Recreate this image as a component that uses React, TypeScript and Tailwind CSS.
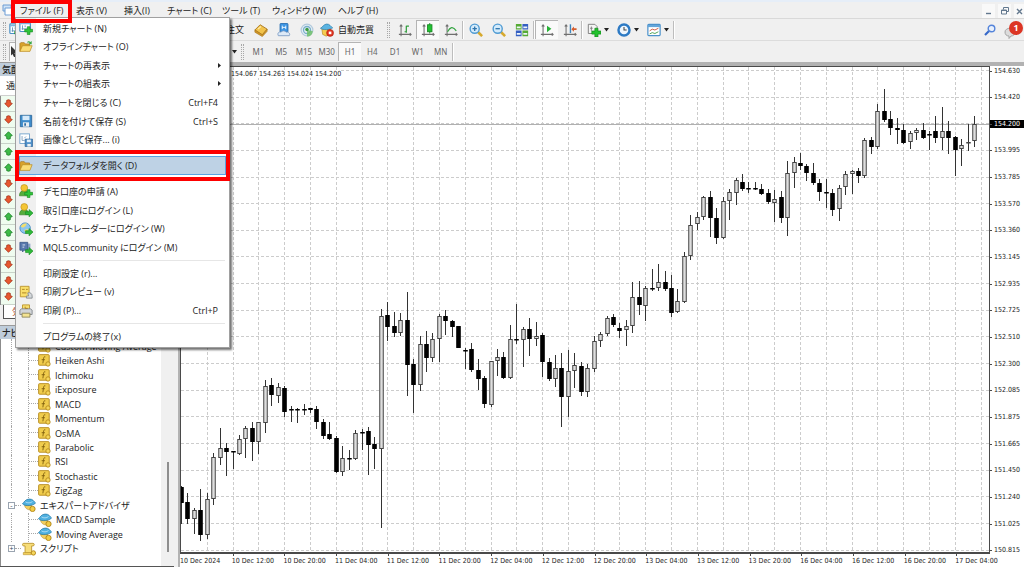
import React from 'react';
import clsx from 'clsx';

type Kind = 'up' | 'down';
type Candle = [high: number, top: number, bottom: number, low: number, kind: Kind];

const U: Kind = 'up';
const D: Kind = 'down';

// One entry per H1 bar, vertical positions in window pixels
const candles: Candle[] = [
  [486, 487, 503, 524, D], [493, 502, 519, 524, D], [508, 510, 519, 534, U], [489, 510, 535, 541, D],
  [493, 499, 535, 539, U], [453, 457, 499, 505, U], [428, 448, 458, 465, U], [443, 448, 452, 476, D],
  [451, 451, 452, 469, D], [435, 439, 454, 455, U], [426, 428, 439, 458, U], [422, 428, 442, 461, D],
  [422, 422, 442, 454, U], [380, 386, 423, 433, U], [378, 385, 395, 406, D], [383, 387, 396, 403, U],
  [386, 388, 412, 417, D], [406, 409, 410, 422, D], [408, 409, 410, 423, D], [404, 409, 410, 415, D],
  [408, 408, 410, 413, D], [406, 409, 422, 429, D], [419, 422, 436, 439, D], [422, 434, 439, 440, D],
  [436, 438, 472, 473, D], [446, 458, 472, 476, U], [450, 458, 459, 470, D], [430, 433, 459, 460, U],
  [429, 432, 433, 450, D], [427, 431, 445, 475, D], [437, 444, 449, 469, D], [309, 316, 449, 528, U],
  [302, 315, 327, 341, D], [312, 326, 333, 337, D], [313, 320, 333, 336, U], [292, 320, 365, 396, D],
  [359, 364, 385, 413, D], [336, 344, 385, 391, U], [331, 344, 358, 372, D], [333, 339, 358, 362, U],
  [314, 316, 339, 362, U], [310, 316, 321, 335, D], [320, 321, 327, 337, D], [326, 326, 348, 348, D],
  [348, 350, 351, 369, D], [343, 349, 370, 372, D], [359, 370, 379, 390, D], [376, 378, 404, 408, D],
  [361, 361, 405, 407, U], [349, 357, 361, 376, U], [352, 357, 378, 379, D], [325, 339, 378, 379, U],
  [304, 339, 340, 344, D], [327, 329, 340, 367, U], [318, 329, 339, 356, D], [322, 336, 339, 346, U],
  [333, 335, 362, 377, D], [358, 362, 379, 381, D], [355, 368, 379, 387, U], [353, 368, 397, 427, D],
  [350, 371, 397, 417, U], [353, 365, 371, 388, U], [362, 366, 392, 396, D], [364, 368, 392, 397, U],
  [336, 341, 369, 372, U], [332, 334, 341, 347, U], [316, 318, 334, 336, U], [314, 317, 325, 327, D],
  [323, 328, 331, 338, D], [320, 326, 330, 346, U], [282, 297, 326, 333, U], [281, 297, 305, 315, D],
  [286, 288, 306, 321, U], [269, 288, 289, 291, D], [264, 282, 288, 291, U], [271, 282, 289, 291, D],
  [275, 288, 313, 317, D], [289, 301, 312, 313, U], [252, 256, 302, 303, U], [215, 225, 256, 260, U],
  [212, 217, 224, 230, U], [196, 197, 217, 220, U], [191, 197, 218, 237, D], [208, 218, 238, 244, D],
  [197, 201, 238, 239, U], [189, 192, 201, 220, U], [178, 180, 193, 205, U], [174, 182, 189, 191, D],
  [182, 188, 189, 193, D], [182, 188, 189, 190, D], [184, 189, 194, 195, D], [189, 193, 202, 204, D],
  [190, 199, 203, 222, U], [191, 197, 218, 223, D], [161, 173, 218, 236, U], [157, 162, 173, 188, U],
  [153, 163, 166, 170, D], [164, 166, 173, 181, D], [163, 173, 183, 185, D], [179, 183, 192, 201, D],
  [179, 192, 193, 208, D], [189, 193, 210, 216, D], [185, 188, 209, 221, U], [171, 174, 187, 195, U],
  [170, 171, 174, 194, U], [168, 171, 176, 183, D], [138, 140, 176, 178, U], [137, 140, 147, 154, D],
  [104, 111, 147, 149, U], [89, 111, 120, 122, D], [111, 119, 128, 135, D], [118, 128, 130, 144, D],
  [124, 130, 143, 144, D], [131, 133, 142, 149, U], [128, 130, 133, 140, U], [123, 130, 138, 139, D],
  [131, 134, 135, 150, D], [116, 131, 138, 143, D], [107, 131, 138, 150, U], [121, 131, 138, 154, D],
  [136, 137, 150, 176, D], [139, 145, 149, 166, U], [124, 142, 143, 151, U], [116, 124, 141, 147, U],
];

const prices = [
  '154.630', '154.420', '154.200', '153.995', '153.785', '153.570', '153.360', '153.145', '152.935', '152.725',
  '152.510', '152.300', '152.085', '151.875', '151.665', '151.450', '151.240', '151.025', '150.815',
];

const dates = [
  '10 Dec 2024', '10 Dec 12:00', '10 Dec 20:00', '11 Dec 04:00', '11 Dec 12:00', '11 Dec 20:00', '12 Dec 04:00',
  '12 Dec 12:00', '12 Dec 20:00', '13 Dec 04:00', '13 Dec 12:00', '13 Dec 20:00', '16 Dec 04:00', '16 Dec 12:00',
  '16 Dec 20:00', '17 Dec 04:00',
];

const PLOT_TOP = 67;
const BAR_STEP = 6.448;
const ROW_STEP = 26.64;

/* ---------- icons ---------- */

interface IconProps {
  size?: number;
  children: React.ReactNode;
}

const Icon: React.FC<IconProps> = ({ size = 14, children }) => (
  <svg width={size} height={size} viewBox="0 0 16 16" fill="none" className="shrink-0" aria-hidden="true">
    {children}
  </svg>
);

const Plus = () => (
  <path d="M9.500 6.500h3v3h3v3h-3v3h-3v-3h-3v-3h3z" fill="#2fc43a" stroke="#128a1c" strokeWidth=".7" />
);

const GreenArrow = () => (
  <path d="M7.500 10h4V7.500l4.500 4-4.500 4.300v-2.600h-4z" fill="#2fb83a" stroke="#128a1c" strokeWidth=".7" />
);

const NewChartIcon = () => (
  <Icon>
    <rect x="1" y="1" width="12" height="11" rx="1" fill="#fff" stroke="#4b8fc4" strokeWidth="1.400" />
    <path d="M1 3h12" stroke="#7db5df" strokeWidth="1.600" />
    <path d="M4 5v5M3 9h7M7 5v2" stroke="#5a8fb8" />
    <Plus />
  </Icon>
);

const FolderIcon = ({ arrow = false }: { arrow?: boolean }) => (
  <Icon>
    <path d="M1 13V4l1-1h4l1 1.500h5V7" fill="#d9a32c" stroke="#a9761a" strokeWidth=".8" />
    <path d="M1 13l3-6.500h11L12.500 13z" fill="#fbdc74" stroke="#b98a22" strokeWidth=".8" />
    {arrow && <path d="M9 3c1-2 3-2 4-.8L14.500 1v3.800H11l1.200-1.300c-1-.8-1.700-.6-3.200-.5z" fill="#3aa743" />}
  </Icon>
);

const SaveIcon = () => (
  <Icon>
    <path d="M1.500 1.500h13v13h-13z" fill="#3f8ccb" stroke="#245f94" strokeWidth=".9" />
    <path d="M4 2h8v5H4z" fill="#d6eafa" />
    <path d="M4.500 9.500h7v5h-7z" fill="#e9eef2" />
    <path d="M6 10.500h2v3H6z" fill="#2d6da6" />
  </Icon>
);

const SaveImageIcon = () => (
  <Icon>
    <rect x="1" y="1" width="11" height="11" fill="#fff" stroke="#6d9fca" />
    <path d="M3.500 3.500v5h3M6 6l2-2" stroke="#7b9cba" />
    <path d="M7 7h8.500v8.500H7z" fill="#4d8fc9" stroke="#2b6295" strokeWidth=".8" />
    <path d="M9 7.500h4.500v3H9z" fill="#e3f0fb" />
    <path d="M9.500 12.500h4v3h-4z" fill="#eef2f5" />
  </Icon>
);

const PersonIcon = ({ arrow = false }: { arrow?: boolean }) => (
  <Icon>
    <path d="M.5 13.500C.5 9.500 2.500 7.500 6 7.500s5 2 5.500 6z" fill="#55ad3c" stroke="#2f7d1d" strokeWidth=".7" />
    <circle cx="6" cy="4.500" r="3.900" fill="#f4c534" stroke="#b98a17" strokeWidth=".7" />
    {arrow ? <GreenArrow /> : <Plus />}
  </Icon>
);

const GlobeIcon = () => (
  <Icon>
    <circle cx="7" cy="7" r="6" fill="#8cc5ee" stroke="#3e83ba" strokeWidth=".9" />
    <path d="M2 5c2-3 5-4 7-3L7 5 4.500 6.500zM6 9l4-1 1 3-3 2z" fill="#f3dd6b" />
    <GreenArrow />
  </Icon>
);

const CommunityIcon = () => (
  <Icon>
    <path d="M8 3h5v7H8z" fill="#8fa6ca" />
    <path d="M1 1.500h9v9H6l-2 2v-2H1z" fill="#5878ad" stroke="#324f80" strokeWidth=".8" />
    <path d="M4 4.500h3M4 7h2" stroke="#e6edf8" />
    <GreenArrow />
  </Icon>
);

const PreviewIcon = () => (
  <Icon>
    <path d="M1.500 1.500h10v12h-10z" fill="#f9df6a" stroke="#b9922a" />
    <path d="M3.500 5h3M3.500 9h5M8 5h2" stroke="#a87c1a" />
    <path d="M10 9c3-1 5 1 5 3.500V15H8.500v-2.500H11z" fill="#d5d9dc" stroke="#868b90" />
  </Icon>
);

const PrinterIcon = () => (
  <Icon>
    <path d="M4 1h8v6H4z" fill="#f8df71" stroke="#b9922a" />
    <path d="M1 7l2-1.500h10L15 7v5H1z" fill="#d2d5d8" stroke="#7f858a" />
    <path d="M3.500 10.500h9V15h-9z" fill="#f4e391" stroke="#8b8359" />
    <path d="M7 3v2h3" stroke="#a87c1a" />
  </Icon>
);

const IndicatorIcon = () => (
  <Icon size={13}>
    <rect x=".8" y=".8" width="13" height="13" rx="1" fill="#f0cc4c" stroke="#b98f25" strokeWidth="1.200" />
    <path d="M9 3.500c-2-.5-2 1-2.300 3L6 11.500M4.500 7h4" stroke="#7d5c0d" strokeWidth="1.100" />
    <circle cx="12.300" cy="12.300" r="2.700" fill="#f5d65c" stroke="#b08316" />
  </Icon>
);

const ExpertIcon = () => (
  <Icon size={14}>
    <path d="M3 8c0 3 3 6 7 5.500l1-5.500z" fill="#f3cf5f" stroke="#ac8524" strokeWidth=".6" />
    <path d="M.5 6.500C2.500 5 3.500 1.500 8 1.200S13.500 4 15.500 5.500C14 9 3 10 .5 6.500z" fill="#4fb0e0" stroke="#2377a5" strokeWidth=".8" />
    <path d="M4 4.500c2 1.500 6 1.500 8-.5" stroke="#b5e0f5" />
    <circle cx="12" cy="12.500" r="3" fill="#f2cc45" stroke="#b08316" />
  </Icon>
);

const ScriptIcon = () => (
  <Icon size={14}>
    <path d="M2 1.500h10.500c2 0 2 3 0 3H11v8H3.500v-8H2c-2 0-2-3 0-3z" fill="#f7dd78" stroke="#b9932f" />
    <path d="M1.500 12h9v2.500h-9z" fill="#f2cf58" stroke="#b9932f" strokeWidth=".7" />
    <circle cx="13" cy="12.500" r="2.500" fill="#f5d65c" stroke="#b08316" />
  </Icon>
);

const BookIcon = () => (
  <Icon>
    <path d="M1 8l6-6 8 5-5.500 6.500z" fill="#f2c34c" stroke="#a6741b" />
    <path d="M1 8v2.500l8.500 5 5.500-6V7l-5.500 6.500z" fill="#d39728" stroke="#a6741b" strokeWidth=".7" />
    <path d="M4.500 7L8 4" stroke="#fdeaa9" strokeWidth="1.400" />
  </Icon>
);

const CloudIcon = () => (
  <Icon>
    <rect x="3.500" y=".5" width="9" height="10" rx="1" fill="#3c95e4" stroke="#2369ad" />
    <path d="M6 3v4M6 5h4M10 3v4" stroke="#fff" />
    <path d="M1.500 14.500c-1.500-3 1-5 3-4 1-2 5-2 6 0 3-.8 5 2 3.500 4z" fill="#dce9f7" stroke="#7d9cc4" />
  </Icon>
);

const SignalIcon = () => (
  <Icon>
    <circle cx="8" cy="8" r="6.700" fill="#e4eef4" stroke="#b3cadd" strokeWidth="1.400" />
    <circle cx="8" cy="8" r="4" stroke="#79aecb" strokeWidth="1.500" />
    <path d="M8 8v7.500c4 0 6.500-3 6.500-6.500z" fill="#6fc069" opacity=".85" />
    <circle cx="8" cy="7.500" r="2" fill="#3d9b46" />
  </Icon>
);

const AutoTradeIcon = () => (
  <Icon>
    <path d="M2 6h10l-1 7-4 2-4-2z" fill="#f6cd4f" stroke="#af8520" strokeWidth=".7" />
    <path d="M.5 6C3 5 4 1.500 7.500 1.200S12 4 14.500 5.500C12 8 3 8.300.5 6z" fill="#5bb4e2" stroke="#2b7cab" strokeWidth=".8" />
    <circle cx="11.500" cy="11.300" r="4" fill="#e0341f" stroke="#a61c0d" strokeWidth=".6" />
    <rect x="10" y="9.800" width="3" height="3" fill="#fff" />
  </Icon>
);

const Axes = () => <path d="M3.500 2v13M1 13h14M2 4l1.500-2L5 4M13.500 11.500L15 13l-1.500 1.500" stroke="#6f6f6f" strokeWidth="1.200" />;

const BarsIcon = () => (
  <Icon>
    <Axes />
    <path d="M9.500 3v8M9.500 3.500h3M7.500 10h2" stroke="#2f9c3c" strokeWidth="1.400" />
  </Icon>
);

const CandlesIcon = () => (
  <Icon>
    <Axes />
    <path d="M10 0v12" stroke="#177e22" />
    <rect x="7.500" y="2" width="5" height="8" fill="#22c233" stroke="#178a22" />
  </Icon>
);

const LineIcon = () => (
  <Icon>
    <Axes />
    <path d="M4 10c3-5 6-7 10-1" stroke="#35a542" strokeWidth="1.400" />
  </Icon>
);

const ZoomIcon = ({ out = false }: { out?: boolean }) => (
  <Icon>
    <path d="M10 10l5 5" stroke="#d6a92e" strokeWidth="3" />
    <circle cx="6.500" cy="6.500" r="5.200" fill="#d4ebfb" stroke="#4f9bd3" strokeWidth="1.600" />
    <path d={out ? 'M4 6.500h5' : 'M4 6.500h5M6.500 4v5'} stroke="#2f75ad" strokeWidth="1.500" />
  </Icon>
);

const TileIcon = () => (
  <Icon>
    <path d="M1 1h6.500v6.500H1zM8.500 8.500H15V15H8.500z" fill="#56ab35" />
    <path d="M8.500 1H15v6.500H8.500zM1 8.500h6.500V15H1z" fill="#345fc2" />
    <path d="M2 4h4.500v2H2zM9.500 4H14v2H9.500zM2 11.500h4.500v2H2zM9.500 11.500H14v2H9.500z" fill="#eef5fb" />
  </Icon>
);

const ScrollIcon = () => (
  <Icon>
    <Axes />
    <path d="M8 3l5 3.700L8 10.500z" fill="#27b236" />
  </Icon>
);

const ShiftIcon = () => (
  <Icon>
    <Axes />
    <path d="M8.500 1.500v10" stroke="#3f86bd" strokeWidth="1.600" />
    <path d="M15.500 6h-3V4L9.500 7l3 3V8h3z" fill="#d65c2c" />
  </Icon>
);

const AddIndicatorIcon = () => (
  <Icon>
    <path d="M1.500 1.500H9L11.500 4v8h-10z" fill="#f4f4f4" stroke="#777" />
    <path d="M5 4v5M3.500 6h3" stroke="#777" />
    <path d="M9 6h3.500v3.200H16v3.500h-3.500V16H9v-3.300H5.500V9.200H9z" fill="#22c22d" stroke="#12881b" strokeWidth=".8" />
  </Icon>
);

const ClockIcon = () => (
  <Icon>
    <circle cx="8" cy="8" r="6.300" fill="#eef6fd" stroke="#2d7ac4" strokeWidth="2.800" />
    <path d="M8 4.500V8h3" stroke="#444" strokeWidth="1.200" />
  </Icon>
);

const TemplateIcon = () => (
  <Icon>
    <rect x="1" y="1.500" width="14" height="13" rx="1" fill="#fff" stroke="#4b91cb" strokeWidth="1.400" />
    <path d="M1 3.500h14" stroke="#64a6da" strokeWidth="2.400" />
    <path d="M3 9l3-2 3 1 4-2" stroke="#c7492f" />
    <path d="M3 12.500l3-1.500 3 1 4-2" stroke="#3c9a45" />
  </Icon>
);

const Caret = () => (
  <svg width="5" height="4" viewBox="0 0 5 4" className="shrink-0" aria-hidden="true">
    <path d="M0 0h5L2.500 3.500z" fill="#222" />
  </svg>
);

/* ---------- top bars ---------- */

const menus = [
  { label: '表示 (V)', width: 'w-12' },
  { label: '挿入(I)', width: 'w-[43px]' },
  { label: 'チャート (C)', width: 'w-[55px]' },
  { label: 'ツール (T)', width: 'w-[50px]' },
  { label: 'ウィンドウ (W)', width: 'w-[66px]' },
  { label: 'ヘルプ (H)', width: 'w-[55px]' },
];

const MenuBar = () => (
  <header className="flex h-[19px] shrink-0 items-center border-t-2 border-b border-t-[#e6eef8] border-b-[#d9d9d9]">
    <div className="flex w-[15px] shrink-0 justify-center">
      <svg width="12" height="12" viewBox="0 0 12 12" aria-hidden="true">
        <path d="M1 1h8v6H1z" fill="#cfe3f7" stroke="#6c9cd4" />
        <path d="M3 4h8v7H3z" fill="#fff" stroke="#6c9cd4" />
      </svg>
    </div>
    <nav className="flex min-w-0 flex-1 items-center">
      <div className="relative flex w-[61px] shrink-0">
        <button type="button" className="pl-[5px] text-left whitespace-nowrap">ファイル (F)</button>
        <div className="pointer-events-none absolute -top-1.5 -left-1 z-30 h-[23px] w-[61px] border-4 border-[#fe0000]" />
      </div>
      {menus.map((m) => (
        <button key={m.label} type="button" className={clsx('shrink-0 text-left whitespace-nowrap', m.width)}>
          {m.label}
        </button>
      ))}
    </nav>
    <div className="flex h-full shrink-0 gap-[3px] pt-0.5">
      <button type="button" aria-label="最小化" className="flex w-[13px] items-center justify-center bg-[#f9f9f9]">
        <svg width="7" height="7" viewBox="0 0 7 7"><path d="M1 5.500h5" stroke="#63788e" strokeWidth="1.400" /></svg>
      </button>
      <button type="button" aria-label="元に戻す" className="flex w-[13px] items-center justify-center bg-[#f9f9f9]">
        <svg width="8" height="8" viewBox="0 0 8 8" fill="none" stroke="#63788e"><path d="M2.500 2.500v-2h5v4h-2M.5 3h5v4h-5zM.5 3.500h5" /></svg>
      </button>
      <button type="button" aria-label="閉じる" className="flex w-2.5 items-center justify-center bg-[#f9f9f9]">
        <svg width="7" height="7" viewBox="0 0 7 7"><path d="M1 1l5 5M6 1L1 6" stroke="#63788e" strokeWidth="1.400" /></svg>
      </button>
    </div>
  </header>
);

const Grip = () => <div className="mx-[3px] h-4 w-[3px] shrink-0 border-x border-dotted border-[#a8a8a8]" />;
const Divider = () => <div className="h-[18px] w-0.5 shrink-0 border-l border-[#bdbdbd] bg-white" />;

interface ToolProps {
  label: string;
  pressed?: boolean;
  caret?: boolean;
  children: React.ReactNode;
}

const Tool: React.FC<ToolProps> = ({ label, pressed, caret, children }) => (
  <button
    type="button"
    aria-label={label}
    className={clsx(
      'flex h-[19px] shrink-0 items-center justify-center',
      caret ? 'w-[30px] gap-[3px]' : 'w-[23px]',
      pressed && 'border-t border-l border-[#b4b4b4] bg-[#fafafa]',
    )}
  >
    {children}
    {caret && <Caret />}
  </button>
);

const MainToolbar = () => (
  <div className="flex h-[22px] shrink-0 items-center border-b border-[#dcdcdc]">
    <div className="flex w-[218px] shrink-0 items-center">
      <Grip />
      <NewChartIcon />
    </div>
    <button type="button" className="w-[31px] shrink-0 pl-2 text-left whitespace-nowrap">注文</button>
    <Tool label="マーケット"><BookIcon /></Tool>
    <Tool label="VPS"><CloudIcon /></Tool>
    <Tool label="シグナル"><SignalIcon /></Tool>
    <button type="button" className="flex w-[66px] shrink-0 items-center gap-1 pl-0.5 whitespace-nowrap">
      <AutoTradeIcon />
      自動売買
    </button>
    <Grip />
    <Tool label="バーチャート"><BarsIcon /></Tool>
    <Tool label="ローソク足" pressed><CandlesIcon /></Tool>
    <Tool label="ラインチャート"><LineIcon /></Tool>
    <Divider />
    <Tool label="拡大"><ZoomIcon /></Tool>
    <Tool label="縮小"><ZoomIcon out /></Tool>
    <Tool label="整列"><TileIcon /></Tool>
    <Divider />
    <Tool label="自動スクロール" pressed><ScrollIcon /></Tool>
    <Tool label="チャートシフト"><ShiftIcon /></Tool>
    <Divider />
    <Tool label="インディケータ" caret><AddIndicatorIcon /></Tool>
    <Tool label="時間足" caret><ClockIcon /></Tool>
    <Tool label="定型チャート" caret><TemplateIcon /></Tool>
    <Divider />
    <div className="flex flex-1 items-center justify-end gap-2">
      <button type="button" aria-label="検索">
        <svg width="12" height="12" viewBox="0 0 12 12" fill="none">
          <path d="M5 7L1 11" stroke="#3668c9" strokeWidth="2.200" />
          <circle cx="7.500" cy="4.500" r="3.300" fill="#e8f0fc" stroke="#5484da" strokeWidth="1.400" />
        </svg>
      </button>
      <button type="button" aria-label="通知" className="relative flex h-[18px] w-5 items-end">
        <svg width="12" height="12" viewBox="0 0 12 12">
          <path d="M1 5c0-5 10-5 10 0 0 3-2 4-4 4l-2 2.500V9C2.500 9 1 7.500 1 5z" fill="#dcdcdc" stroke="#a5a5a5" />
        </svg>
        <span className="absolute top-0 right-px flex size-[14px] items-center justify-center rounded-full bg-[#dc3524] text-[9px] leading-none font-bold text-white">1</span>
      </button>
    </div>
  </div>
);

const periods = ['M1', 'M5', 'M15', 'M30', 'H1', 'H4', 'D1', 'W1', 'MN'];

const PeriodToolbar = () => (
  <div className="flex h-[21px] shrink-0 items-center">
    <div className="flex w-[231px] shrink-0 items-center">
      <Grip />
      <button type="button" aria-label="カーソル" className="flex h-[19px] w-5 items-center border-t border-l border-[#b4b4b4] bg-[#fafafa]">
        <svg width="8" height="12" viewBox="0 0 8 12"><path d="M1 0l7 7H4.500L6 11H4L2.500 8 1 9.500z" fill="#333" /></svg>
      </button>
    </div>
    <div className="flex w-[7px] justify-center"><Caret /></div>
    <Grip />
    <div className="grid w-[205px] shrink-0 grid-cols-9 font-['Noto_Sans'] text-[8px] text-[#666]">
      {periods.map((p) => (
        <button
          key={p}
          type="button"
          className={clsx('h-[19px]', p === 'H1' && 'border-t border-l border-[#b4b4b4] bg-[#fafafa]')}
        >
          {p}
        </button>
      ))}
    </div>
    <Divider />
  </div>
);

/* ---------- side panels ---------- */

const ticks: Kind[] = [D, D, U, U, U, D, D, U, U, D, D, D, D];

const MarketWatch = () => (
  <section className="flex shrink-0 flex-col">
    <h2 className="h-[14px] border-t border-[#9a9a9a] bg-[#bfcddb] pl-0.5 leading-[13px] font-medium">気配</h2>
    <div className="h-5 border-b border-[#cfcfcf] bg-white pl-1.5 leading-[19px]">通</div>
    <ul className="grid h-[209px] auto-rows-fr border-l border-[#8c8c8c]">
      {ticks.map((kind, i) => (
        <li key={i} className="flex items-center border-b border-[#c9d3c9] bg-[#effcef] pl-[3px]">
          <svg width="9" height="9" viewBox="0 0 10 10" aria-hidden="true">
            {kind === U ? (
              <path d="M5 .8L9.200 5 7 6v2.500L5 9.200 3 8.500V6L.8 5z" fill="#3dbb47" stroke="#1d7e27" strokeWidth=".9" />
            ) : (
              <path d="M5 9.200L.8 5 3 4V1.500L5 .8l2 .7V4l2.200 1z" fill="#e8582f" stroke="#a5321a" strokeWidth=".9" />
            )}
          </svg>
        </li>
      ))}
    </ul>
    <div className="flex h-5 pl-[3px]">
      <div className="h-[14px] w-10 border-b border-l border-[#555] bg-white pl-2 leading-[13px] text-[#b0442a]">気</div>
    </div>
  </section>
);

interface TreeItem {
  label: string;
  icon: React.ReactNode;
  depth: 1 | 2;
  toggle?: '+' | '-';
}

const indicators = [
  'Custom Moving Average', 'Heiken Ashi', 'Ichimoku', 'iExposure', 'MACD', 'Momentum', 'OsMA', 'Parabolic', 'RSI',
  'Stochastic', 'ZigZag',
];

const tree: TreeItem[] = [
  ...indicators.map((label): TreeItem => ({ label, icon: <IndicatorIcon />, depth: 2 })),
  { label: 'エキスパートアドバイザ', icon: <ExpertIcon />, depth: 1, toggle: '-' },
  { label: 'MACD Sample', icon: <ExpertIcon />, depth: 2 },
  { label: 'Moving Average', icon: <ExpertIcon />, depth: 2 },
  { label: 'スクリプト', icon: <ScriptIcon />, depth: 1, toggle: '+' },
];

const Navigator = () => (
  <section className="flex min-h-0 flex-1 flex-col border-b border-[#555]">
    <h2 className="h-[14px] shrink-0 border-t border-[#9a9a9a] bg-[#bfcddb] pl-0.5 leading-[13px] font-medium">ナビ</h2>
    <div className="flex min-h-0 flex-1 border-l border-[#8c8c8c] bg-white">
      <ul className="grid h-[217px] min-w-0 flex-1 auto-rows-fr overflow-hidden">
        {tree.map((item) => (
          <li key={item.label} className="flex items-center whitespace-nowrap">
            {item.depth === 2 ? (
              <>
                <span className="ml-2.5 h-full w-[17px] shrink-0 border-l border-dotted border-[#a8a8a8]" />
                <span className="h-full w-[10px] shrink-0 border-l border-dotted border-[#a8a8a8]">
                  <span className="block h-1/2 border-b border-dotted border-[#a8a8a8]" />
                </span>
              </>
            ) : (
              <>
                <button
                  type="button"
                  aria-label={item.label}
                  className="ml-[7px] flex size-[7px] shrink-0 items-center justify-center border border-[#9aa4b0] bg-white text-[7px] leading-none text-[#345]"
                >
                  {item.toggle}
                </button>
                <span className="mr-px w-1.5 shrink-0 border-t border-dotted border-[#a8a8a8]" />
              </>
            )}
            {item.icon}
            <span className="pl-1">{item.label}</span>
          </li>
        ))}
      </ul>
      <div className="flex w-[13px] shrink-0 flex-col items-center justify-end bg-[#f0f0f0] pb-3.5">
        <div className="h-[90px] w-0.5 bg-[#8e8e8e]" />
      </div>
    </div>
  </section>
);

/* ---------- chart ---------- */

const Plot = () => (
  <svg className="h-full min-w-0 flex-1" aria-label="USDJPY H1">
    <g stroke="#cccccc" strokeDasharray="3 2">
      {prices.map((p, i) => (
        <line key={p} x1="0" x2="100%" y1={Math.round(4 + i * ROW_STEP) - 0.5} y2={Math.round(4 + i * ROW_STEP) - 0.5} />
      ))}
      {Array.from({ length: 31 }, (_, i) => {
        const x = Math.round(1 + (i + 1) * 4 * BAR_STEP) - 0.5;
        return <line key={i} x1={x} x2={x} y1="0" y2="100%" />;
      })}
    </g>
    <line x1="0" x2="100%" y1="57.500" y2="57.500" stroke="#b0b0b0" />
    {candles.map(([high, top, bottom, low, kind], i) => {
      const x = Math.round(1 + i * BAR_STEP) - 0.5;
      return (
        <g key={i}>
          <line x1={x} x2={x} y1={high - PLOT_TOP} y2={low - PLOT_TOP} stroke="#333" />
          <rect
            x={x - 1.75}
            y={top - PLOT_TOP + 0.5}
            width={3.5}
            height={Math.max(bottom - top - 1, 0.5)}
            fill={kind === U ? '#dedede' : '#000'}
            stroke={kind === U ? '#444' : '#000'}
          />
        </g>
      );
    })}
  </svg>
);

const ChartWindow = () => (
  <main className="flex min-w-0 flex-1 flex-col border-t-4 border-l-2 border-[#b2b2b2] bg-white">
    <div className="relative flex min-h-0 flex-1">
      <div className="flex min-w-0 flex-1 border border-b-2 border-[#4a4a4a]">
        <Plot />
      </div>
      <ul className="-mb-px flex w-[34px] shrink-0 flex-col justify-between pt-px font-['DejaVu_Sans_Condensed','DejaVu_Sans'] text-[7px]">
        {prices.map((p) => (
          <li key={p} className={clsx('flex h-2 items-center leading-none', p === '154.200' && 'bg-black text-white')}>
            <span className="mr-0.5 w-0.5 border-t border-[#4a4a4a]" />
            {p}
          </li>
        ))}
      </ul>
      <p className="absolute top-1 left-[51px] bg-white font-['DejaVu_Sans_Condensed','DejaVu_Sans'] text-[7px] leading-2 whitespace-pre">
        154.067 154.263 154.024 154.200
      </p>
    </div>
    <ul className="grid h-[13px] shrink-0 auto-cols-fr grid-flow-col pr-[17px] font-['DejaVu_Sans_Condensed','DejaVu_Sans'] text-[7px] leading-[14px] whitespace-nowrap">
      {dates.map((d, i) => (
        <li key={d} className="relative min-w-0">
          {i > 0 && <span className="absolute top-0 left-px h-0.5 w-px bg-[#4a4a4a]" />}
          {d}
        </li>
      ))}
    </ul>
  </main>
);

/* ---------- file menu ---------- */

interface Entry {
  label: string;
  icon?: React.ReactNode;
  keys?: string;
  submenu?: boolean;
  active?: boolean;
}

interface Group {
  height: string;
  entries: Entry[];
}

const groups: Group[] = [
  {
    height: 'h-[130px]',
    entries: [
      { label: '新規チャート (N)', icon: <NewChartIcon /> },
      { label: 'オフラインチャート (O)', icon: <FolderIcon arrow /> },
      { label: 'チャートの再表示', submenu: true },
      { label: 'チャートの組表示', submenu: true },
      { label: 'チャートを閉じる (C)', keys: 'Ctrl+F4' },
      { label: '名前を付けて保存 (S)', icon: <SaveIcon />, keys: 'Ctrl+S' },
      { label: '画像として保存... (i)', icon: <SaveImageIcon /> },
    ],
  },
  { height: 'h-[19px]', entries: [{ label: 'データフォルダを開く (D)', icon: <FolderIcon />, active: true }] },
  {
    height: 'h-[75px]',
    entries: [
      { label: 'デモ口座の申請 (A)', icon: <PersonIcon /> },
      { label: '取引口座にログイン (L)', icon: <PersonIcon arrow /> },
      { label: 'ウェブトレーダーにログイン (W)', icon: <GlobeIcon /> },
      { label: 'MQL5.community にログイン (M)', icon: <CommunityIcon /> },
    ],
  },
  {
    height: 'h-[56px]',
    entries: [
      { label: '印刷設定 (r)...' },
      { label: '印刷プレビュー (v)', icon: <PreviewIcon /> },
      { label: '印刷 (P)...', icon: <PrinterIcon />, keys: 'Ctrl+P' },
    ],
  },
  { height: 'h-[19px]', entries: [{ label: 'プログラムの終了(x)' }] },
];

const MenuEntry: React.FC<Entry> = ({ label, icon, keys, submenu, active }) => (
  <button
    type="button"
    className={clsx(
      'relative flex w-full items-center text-left whitespace-nowrap',
      active && 'bg-[#bed2e5] shadow-[inset_0_0_0_1px_#5aa2e0]',
    )}
  >
    <span className={clsx('flex shrink-0 items-center', active ? 'w-6' : 'w-[27px] pl-[3px]')}>{icon}</span>
    <span className="flex-1">{label}</span>
    {keys && <span className="pr-[11px]">{keys}</span>}
    {submenu && (
      <svg width="3" height="5" viewBox="0 0 3 5" className="mr-2" aria-hidden="true">
        <path d="M0 0l3 2.500L0 5z" fill="#222" />
      </svg>
    )}
    {active && <span className="pointer-events-none absolute -inset-x-1 -inset-y-1.5 border-4 border-[#fe0000]" />}
  </button>
);

const FileMenu = () => (
  <div className="absolute top-[17px] left-[15px] z-20 w-[215px] border border-[#a0a0a0] bg-linear-to-r from-[#f0f0f0] from-[20px] to-white to-[20px] pt-px pb-px shadow-[2px_2px_2px_rgba(0,0,0,0.55)]">
    {groups.map((g, i) => (
      <React.Fragment key={g.entries[0].label}>
        {i > 0 && (
          <div className="mr-1 ml-[27px] flex h-[7px] items-center">
            <div className="h-px flex-1 bg-[#e6e6e6]" />
          </div>
        )}
        <div className={clsx('grid auto-rows-fr', g.height, g.entries[0].active && 'px-[3px]')}>
          {g.entries.map((e) => (
            <MenuEntry key={e.label} {...e} />
          ))}
        </div>
      </React.Fragment>
    ))}
  </div>
);

const App: React.FC = () => (
  <div
    lang="ja"
    className="relative flex h-screen flex-col overflow-hidden bg-[#f0f0f0] font-['Open_Sans','Noto_Sans_CJK_JP',sans-serif] text-[9px] leading-none text-[#222] [font-feature-settings:'palt']"
  >
    <MenuBar />
    <MainToolbar />
    <PeriodToolbar />
    <div className="flex min-h-0 flex-1">
      <aside className="mr-1 flex w-[174px] shrink-0 flex-col">
        <MarketWatch />
        <Navigator />
      </aside>
      <ChartWindow />
    </div>
    <FileMenu />
  </div>
);

export default App;
